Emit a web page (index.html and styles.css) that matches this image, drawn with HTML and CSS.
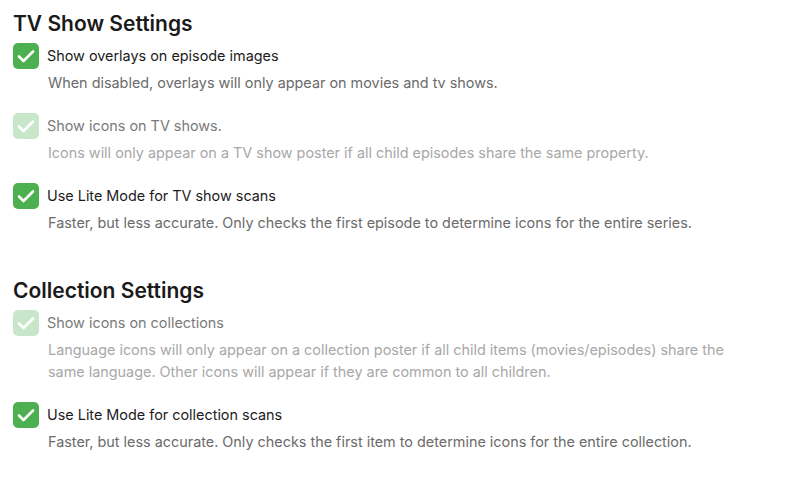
FILE: index.html
```html
<!DOCTYPE html>
<html>
<head>
<meta charset="utf-8">
<link rel="stylesheet" href="styles.css">
</head>
<body>
<div class="page">
  <section class="group">
    <h2 class="title">TV Show Settings</h2>
    <div class="option">
      <div class="row">
        <span class="box"><svg viewBox="0 0 26 26" width="26" height="26"><path d="M6 13.5l4.5 4.5L20 8.5" fill="none" stroke="#fff" stroke-width="2.6" stroke-linecap="round" stroke-linejoin="round"/></svg></span>
        <span class="label">Show overlays on episode images</span>
      </div>
      <p class="desc">When disabled, overlays will only appear on movies and tv shows.</p>
    </div>
    <div class="option disabled">
      <div class="row">
        <span class="box"><svg viewBox="0 0 26 26" width="26" height="26"><path d="M6 13.5l4.5 4.5L20 8.5" fill="none" stroke="#fff" stroke-width="2.6" stroke-linecap="round" stroke-linejoin="round"/></svg></span>
        <span class="label">Show icons on TV shows.</span>
      </div>
      <p class="desc">Icons will only appear on a TV show poster if all child episodes share the same property.</p>
    </div>
    <div class="option">
      <div class="row">
        <span class="box"><svg viewBox="0 0 26 26" width="26" height="26"><path d="M6 13.5l4.5 4.5L20 8.5" fill="none" stroke="#fff" stroke-width="2.6" stroke-linecap="round" stroke-linejoin="round"/></svg></span>
        <span class="label">Use Lite Mode for TV show scans</span>
      </div>
      <p class="desc">Faster, but less accurate. Only checks the first episode to determine icons for the entire series.</p>
    </div>
  </section>
  <section class="group">
    <h2 class="title">Collection Settings</h2>
    <div class="option disabled">
      <div class="row">
        <span class="box"><svg viewBox="0 0 26 26" width="26" height="26"><path d="M6 13.5l4.5 4.5L20 8.5" fill="none" stroke="#fff" stroke-width="2.6" stroke-linecap="round" stroke-linejoin="round"/></svg></span>
        <span class="label">Show icons on collections</span>
      </div>
      <p class="desc">Language icons will only appear on a collection poster if all child items (movies/episodes) share the same language. Other icons will appear if they are common to all children.</p>
    </div>
    <div class="option">
      <div class="row">
        <span class="box"><svg viewBox="0 0 26 26" width="26" height="26"><path d="M6 13.5l4.5 4.5L20 8.5" fill="none" stroke="#fff" stroke-width="2.6" stroke-linecap="round" stroke-linejoin="round"/></svg></span>
        <span class="label">Use Lite Mode for collection scans</span>
      </div>
      <p class="desc">Faster, but less accurate. Only checks the first item to determine icons for the entire collection.</p>
    </div>
  </section>
</div>
</body>
</html>
```
FILE: styles.css
```css
* { box-sizing: border-box; }
body {
  margin: 0;
  background: #fff;
  font-family: Inter, "Noto Sans", sans-serif;
  color: #1c1c1c;
}
.page {
  padding: 10px 13px 0;
  display: flex;
  flex-direction: column;
  gap: 43px;
}
.group {
  display: flex;
  flex-direction: column;
  gap: 19px;
}
.title {
  margin: 0 0 -14px;
  font-size: 21px;
  font-weight: 600;
  line-height: 28px;
  color: #1a1a1a;
}
.option {
  display: flex;
  flex-direction: column;
  gap: 3px;
  width: 740px;
}
.row {
  display: flex;
  align-items: center;
  gap: 8px;
}
.box {
  width: 26px;
  height: 26px;
  border-radius: 5px;
  background: #4caf50;
  display: flex;
  align-items: center;
  justify-content: center;
  flex: none;
}
.box svg { display: block; }
.label {
  font-size: 14.4px;
  line-height: 20px;
}
.desc {
  margin: 0;
  padding-left: 35px;
  font-size: 14.4px;
  line-height: 22px;
  color: #6b6b6b;
}
.disabled .box { opacity: 0.3; }
.disabled .label { color: #7a7a7a; }
.disabled .desc { color: #a8a8a8; }
```
